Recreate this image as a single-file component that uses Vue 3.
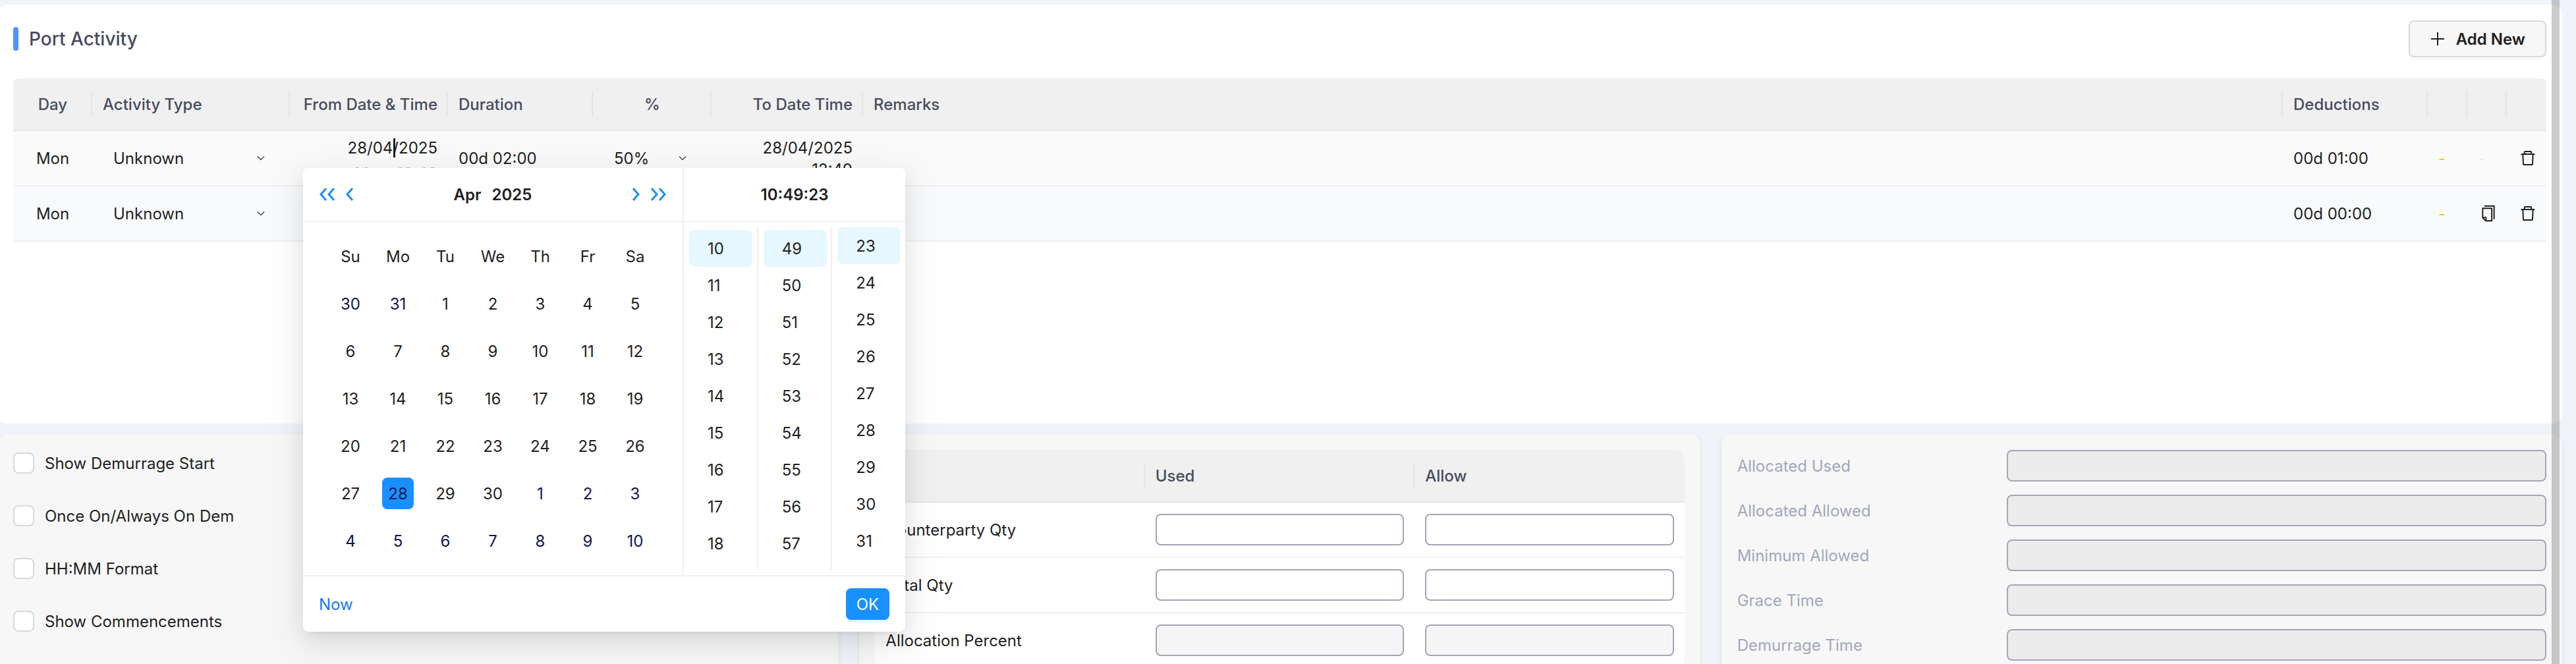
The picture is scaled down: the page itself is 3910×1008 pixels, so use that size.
<script setup>
import { ref } from 'vue'

const rows = ref([
  { id: 1, day: 'Mon', activity: 'Unknown', from: '28/04/2025', fromNote: 'Mon, 10:49', duration: '00d 02:00', percent: '50%', to: ['28/04/2025', '12:49'], deductions: '00d 01:00', copy: false, open: true },
  { id: 2, day: 'Mon', activity: 'Unknown', deductions: '00d 00:00', copy: true, open: false },
])

const weekdays = ['Su', 'Mo', 'Tu', 'We', 'Th', 'Fr', 'Sa']
const selectedDay = 28

// March 30 is the first cell; April runs over cells 2..31.
const cells = Array.from({ length: 42 }, (_, i) => {
  const n = i - 1
  const outside = n < 1 || n > 30
  const label = n < 1 ? n + 31 : n > 30 ? n - 30 : n
  return { label, outside, selected: !outside && label === selectedDay }
})
const weeks = Array.from({ length: 6 }, (_, w) => cells.slice(w * 7, w * 7 + 7))

const range = (start, count) => Array.from({ length: count }, (_, i) => start + i)
const timeColumns = [range(10, 9), range(49, 9), range(23, 9)]

const options = ['Show Demurrage Start', 'Once On/Always On Dem', 'HH:MM Format', 'Show Commencements']
const quantities = [
  { label: 'Counterparty Qty', disabled: false },
  { label: 'Total Qty', disabled: false },
  { label: 'Allocation Percent', disabled: true },
]
const totals = ['Allocated Used', 'Allocated Allowed', 'Minimum Allowed', 'Grace Time', 'Demurrage Time']
</script>

<template>
  <div class="page">
    <main class="content">
      <section class="card port">
        <header class="port-head">
          <h2 class="title">Port Activity</h2>
          <button type="button" class="add">
            <svg width="24" height="24" viewBox="0 0 24 24" fill="none" stroke="currentColor" stroke-width="2" aria-hidden="true">
              <path d="M12 2v20M2 12h20" />
            </svg>
            Add New
          </button>
        </header>

        <table class="grid activity">
          <colgroup>
            <col class="w-day" /><col class="w-type" /><col class="w-from" /><col class="w-duration" /><col class="w-percent" />
            <col class="w-to" /><col /><col class="w-deductions" /><col class="w-icon" /><col class="w-icon" /><col class="w-icon" />
          </colgroup>
          <thead>
            <tr>
              <th class="center">Day</th>
              <th>Activity Type</th>
              <th class="right">From Date &amp; Time</th>
              <th>Duration</th>
              <th class="center">%</th>
              <th class="right">To Date Time</th>
              <th>Remarks</th>
              <th>Deductions</th>
              <th></th>
              <th></th>
              <th></th>
            </tr>
          </thead>
          <tbody>
            <tr v-for="row in rows" :key="row.id">
              <td class="center">{{ row.day }}</td>
              <td>
                <div class="pick">
                  <select class="select" aria-label="Activity type"><option>{{ row.activity }}</option></select>
                  <svg class="caret" width="12" height="8" viewBox="0 0 24 16" aria-hidden="true"><path d="M2 3l10 10L22 3" /></svg>
                </div>
              </td>
              <td class="right from">
                <template v-if="row.from">
                  <input class="date" type="text" aria-label="From date" :value="row.from" />
                  <span class="cursor"></span>
                  <div class="note">{{ row.fromNote }}</div>
                </template>

                <div v-if="row.open" class="picker">
                  <div class="panels">
                    <div class="date-panel">
                      <div class="picker-head months">
                        <div class="arrows">
                          <button type="button" class="arrow" aria-label="Previous year"><svg width="24" height="20" viewBox="0 0 24 20"><path d="M11 1l-8 9 8 9M23 1l-8 9 8 9" /></svg></button>
                          <button type="button" class="arrow" aria-label="Previous month"><svg width="12" height="20" viewBox="0 0 12 20"><path d="M11 1l-8 9 8 9" /></svg></button>
                        </div>
                        <div class="month"><button type="button">Apr</button><button type="button">2025</button></div>
                        <div class="arrows">
                          <button type="button" class="arrow" aria-label="Next month"><svg width="12" height="20" viewBox="0 0 12 20"><path d="M1 1l8 9-8 9" /></svg></button>
                          <button type="button" class="arrow" aria-label="Next year"><svg width="24" height="20" viewBox="0 0 24 20"><path d="M1 1l8 9-8 9M13 1l8 9-8 9" /></svg></button>
                        </div>
                      </div>
                      <table class="calendar">
                        <thead>
                          <tr><th v-for="d in weekdays" :key="d">{{ d }}</th></tr>
                        </thead>
                        <tbody>
                          <tr v-for="(week, w) in weeks" :key="w">
                            <td v-for="(c, i) in week" :key="i">
                              <button type="button" class="day" :class="{ outside: c.outside, selected: c.selected }">{{ c.label }}</button>
                            </td>
                          </tr>
                        </tbody>
                      </table>
                    </div>
                    <div class="time-panel">
                      <div class="picker-head clock">10:49:23</div>
                      <div class="columns">
                        <ul v-for="(col, i) in timeColumns" :key="i" class="column">
                          <li v-for="(n, j) in col" :key="n"><button type="button" class="unit" :class="{ current: j === 0 }">{{ n }}</button></li>
                        </ul>
                      </div>
                    </div>
                  </div>
                  <div class="picker-foot">
                    <a href="#" class="now">Now</a>
                    <button type="button" class="ok">OK</button>
                  </div>
                </div>
              </td>
              <td>{{ row.duration }}</td>
              <td>
                <div v-if="row.percent" class="pick">
                  <select class="select" aria-label="Percent"><option>{{ row.percent }}</option></select>
                  <svg class="caret" width="12" height="8" viewBox="0 0 24 16" aria-hidden="true"><path d="M2 3l10 10L22 3" /></svg>
                </div>
              </td>
              <td class="right"><div v-for="line in row.to" :key="line">{{ line }}</div></td>
              <td></td>
              <td>{{ row.deductions }}</td>
              <td class="dash">-</td>
              <td class="faint">
                <button v-if="row.copy" type="button" class="icon" aria-label="Copy">
                  <svg width="28" height="28" viewBox="0 0 1024 1024" fill="currentColor"><path d="M832 64H296c-4.400 0-8 3.600-8 8v56c0 4.400 3.600 8 8 8h496v688c0 4.400 3.600 8 8 8h56c4.400 0 8-3.600 8-8V96c0-17.700-14.300-32-32-32zM704 192H192c-17.700 0-32 14.300-32 32v530.700c0 8.500 3.400 16.600 9.400 22.600l173.300 173.300c2.200 2.200 4.700 4 7.400 5.500v1.900h4.200c3.500 1.300 7.200 2 11 2H704c17.700 0 32-14.300 32-32V224c0-17.700-14.300-32-32-32zM350 856.200L263.900 770H350v86.200zM664 888H414V746c0-22.100-17.900-40-40-40H232V264h432v624z" /></svg>
                </button>
                <template v-else>-</template>
              </td>
              <td>
                <button type="button" class="icon" aria-label="Delete">
                  <svg width="28" height="28" viewBox="0 0 1024 1024" fill="currentColor"><path d="M360 184h-8c4.400 0 8-3.600 8-8v8h304v-8c0 4.400 3.600 8 8 8h-8v72h72v-80c0-35.300-28.700-64-64-64H352c-35.300 0-64 28.700-64 64v80h72v-72zm504 72H160c-17.700 0-32 14.300-32 32v32c0 4.400 3.600 8 8 8h60.400l24.700 523c1.600 34.100 29.800 61 63.900 61h454c34.200 0 62.300-26.800 63.900-61l24.700-523H888c4.400 0 8-3.600 8-8v-32c0-17.700-14.300-32-32-32zM731.300 840H292.700l-24.200-512h487l-24.200 512z" /></svg>
                </button>
              </td>
            </tr>
          </tbody>
        </table>
      </section>

      <div class="lower">
        <section class="card panel options">
          <label v-for="o in options" :key="o" class="option"><input type="checkbox" />{{ o }}</label>
        </section>

        <section class="card panel">
          <table class="grid quantity">
            <thead>
              <tr><th></th><th>Used</th><th>Allow</th></tr>
            </thead>
            <tbody>
              <tr v-for="q in quantities" :key="q.label">
                <td>{{ q.label }}</td>
                <td><input class="field" type="text" :aria-label="q.label + ' used'" :disabled="q.disabled" /></td>
                <td><input class="field" type="text" :aria-label="q.label + ' allow'" :disabled="q.disabled" /></td>
              </tr>
            </tbody>
          </table>
        </section>

        <section class="card panel totals">
          <div v-for="(t, i) in totals" :key="t" class="total">
            <label :for="'total-' + i">{{ t }}</label>
            <input :id="'total-' + i" class="field" type="text" disabled />
          </div>
        </section>
      </div>
    </main>
    <div class="scroll-thumb"></div>
  </div>
</template>

<style>
body {
  margin: 0;
  background: #f0f4f8;
}
</style>

<style scoped>
.page {
  position: relative;
  box-sizing: border-box;
  height: 100vh;
  overflow: hidden;
  padding: 7px 21px 0 0;
  background: #f0f4f8;
  color: #1f1f1f;
  font: 400 24px/33px Inter, "Liberation Sans", sans-serif;
}
.page *,
.page *::after {
  box-sizing: border-box;
}
button,
input,
select {
  font: inherit;
  color: inherit;
  margin: 0;
}
button {
  padding: 0;
  border: 0;
  background: none;
  cursor: pointer;
}
svg {
  display: block;
}

.content {
  display: flex;
  flex-direction: column;
  gap: 16px;
  margin-left: -4px;
}
.card {
  border-radius: 16px;
  padding: 24px;
}
.port {
  min-height: 636px;
  background: #fff;
}
.port-head {
  display: flex;
  align-items: center;
  justify-content: space-between;
  margin-bottom: 32px;
}
.title {
  display: flex;
  align-items: center;
  gap: 16px;
  margin: 0;
  color: #474b5f;
  font-size: 28px;
  font-weight: 500;
}
.title::before {
  content: "";
  width: 8px;
  height: 36px;
  border-radius: 4px;
  background: #4d94ff;
}
.add {
  display: flex;
  align-items: center;
  gap: 16px;
  height: 56px;
  padding: 0 30px;
  border: 2px solid #d9d9d9;
  border-radius: 8px;
  background: #f7f7f7;
  box-shadow: 0 4px 0 rgba(0, 0, 0, 0.02);
  font-weight: 600;
}

.grid {
  width: 100%;
  table-layout: fixed;
  border-collapse: separate;
  border-spacing: 0;
}
.grid > thead > tr > th {
  position: relative;
  height: 80px;
  padding: 0 16px;
  border-bottom: 2px solid #e6e6e6;
  background: #f0f0f0;
  color: #474b5f;
  font-weight: 500;
  text-align: left;
}
.grid > thead > tr > th:not(:last-child)::after {
  content: "";
  position: absolute;
  top: 20px;
  right: 0;
  width: 2px;
  height: 38px;
  background: #e6e6e6;
}
.grid > tbody > tr > td {
  height: 84px;
  padding: 0 16px;
  border-bottom: 2px solid #f0f0f0;
}
.grid .center {
  text-align: center !important;
}
.grid .right {
  text-align: right !important;
}
.activity > thead > tr > th:first-child {
  border-top-left-radius: 8px;
}
.activity > thead > tr > th:last-child {
  border-top-right-radius: 8px;
}
.activity > tbody > tr > td {
  background: #fafafa;
}
.activity > tbody > tr > td.right {
  padding-top: 2px;
}
.activity > tbody > tr:nth-child(even) > td {
  background: #f8fafc;
}
.w-day { width: 120px; }
.w-type { width: 300px; }
.w-from { width: 240px; }
.w-duration { width: 220px; }
.w-percent { width: 180px; }
.w-to { width: 230px; }
.w-deductions { width: 220px; }
.w-icon { width: 60px; }

.pick {
  display: flex;
  align-items: center;
  padding: 0 22px 0 16px;
}
.select {
  flex: 1;
  min-width: 0;
  padding: 0;
  border: 0;
  background: none;
  appearance: none;
  outline: none;
}
.caret {
  fill: none;
  stroke: #474b5f;
  stroke-width: 3;
}
.dash {
  color: #fac60a;
}
.faint {
  color: #ececec;
}
.icon {
  display: flex;
  justify-content: center;
  width: 32px;
  color: #1f1f1f;
}

.from {
  position: relative;
}
.date {
  display: block;
  width: 100%;
  height: 33px;
  padding: 0;
  border: 0;
  background: none;
  text-align: right;
  outline: none;
}
.cursor {
  position: absolute;
  top: 11px;
  left: 157px;
  width: 3px;
  height: 29px;
  background: #1f1f1f;
}
.note {
  margin: 6px 0 -6px;
  color: #a3a7ba;
}

.picker {
  position: absolute;
  z-index: 10;
  top: 56px;
  left: 20px;
  border-radius: 8px;
  background: #fff;
  box-shadow: 0 12px 32px rgba(0, 0, 0, 0.08), 0 6px 12px -8px rgba(0, 0, 0, 0.12), 0 18px 56px 16px rgba(0, 0, 0, 0.05);
  text-align: left;
}
.panels {
  display: flex;
}
.date-panel {
  width: 578px;
  border-right: 2px solid #f0f0f0;
}
.picker-head {
  display: flex;
  align-items: center;
  height: 82px;
  padding: 0 24px;
  border-bottom: 2px solid #f0f0f0;
  font-weight: 600;
}
.months {
  justify-content: space-between;
}
.clock {
  justify-content: center;
}
.arrows,
.month {
  display: flex;
  gap: 16px;
}
.arrow {
  fill: none;
  stroke: #1890ff;
  stroke-width: 3;
}
.calendar {
  margin: 16px 36px;
  border-spacing: 0;
  table-layout: fixed;
}
.calendar th,
.calendar td {
  width: 72px;
  height: 72px;
  padding: 0;
  font-weight: 400;
  text-align: center;
}
.day {
  display: block;
  width: 48px;
  height: 48px;
  margin: 0 auto;
  border-radius: 8px;
}
.outside {
  color: #0f1554;
}
.selected {
  background: #1890ff;
  color: #0f1554;
}
.time-panel {
  width: 336px;
}
.columns {
  display: flex;
  height: 520px;
  margin: 8px 0;
}
.column {
  flex: 1;
  margin: 0;
  padding: 4px 0 0;
  overflow: hidden;
  list-style: none;
}
.column + .column {
  border-left: 2px solid #f0f0f0;
}
.column:last-child {
  padding-top: 0;
}
.unit {
  display: block;
  width: 96px;
  height: 56px;
  margin-left: 8px;
  padding-left: 28px;
  border-radius: 8px;
  text-align: left;
}
.current {
  background: #e6f7ff;
}
.picker-foot {
  display: flex;
  align-items: center;
  justify-content: space-between;
  height: 86px;
  padding: 0 24px;
  border-top: 2px solid #f0f0f0;
}
.now {
  color: #1677ff;
  text-decoration: none;
}
.ok {
  width: 66px;
  height: 48px;
  border-radius: 8px;
  background: #1890ff;
  box-shadow: 0 4px 0 #e6f7ff;
  color: #fff;
}

.lower {
  display: grid;
  grid-template-columns: repeat(3, 1fr);
  gap: 32px;
}
.panel {
  min-height: 400px;
  background: #f7f7f7;
  box-shadow: 0 2px 6px rgba(0, 0, 0, 0.1);
}
.options {
  display: flex;
  flex-direction: column;
  gap: 48px;
  padding-top: 28px;
}
.option {
  display: flex;
  align-items: center;
  gap: 16px;
  height: 32px;
}
.option input {
  width: 32px;
  height: 32px;
  border: 2px solid #d9d9d9;
  border-radius: 8px;
  background: #fff;
  appearance: none;
}
.quantity {
  overflow: hidden;
  border-radius: 16px;
  background: #fff;
}
.field {
  display: block;
  width: 100%;
  height: 48px;
  padding: 0 16px;
  border: 2px solid #a3a6b8;
  border-radius: 8px;
  background: #fff;
}
.field:disabled {
  background: #f5f5f5;
}
.totals {
  display: flex;
  flex-direction: column;
  gap: 20px;
}
.total {
  display: grid;
  grid-template-columns: 1fr 2fr;
  align-items: center;
  color: #a3a7ba;
}
.totals .field {
  background: #ececec;
}

.scroll-thumb {
  position: absolute;
  z-index: 20;
  top: 0;
  right: 25px;
  bottom: 0;
  width: 12px;
  background: rgba(0, 0, 0, 0.2);
}
</style>
